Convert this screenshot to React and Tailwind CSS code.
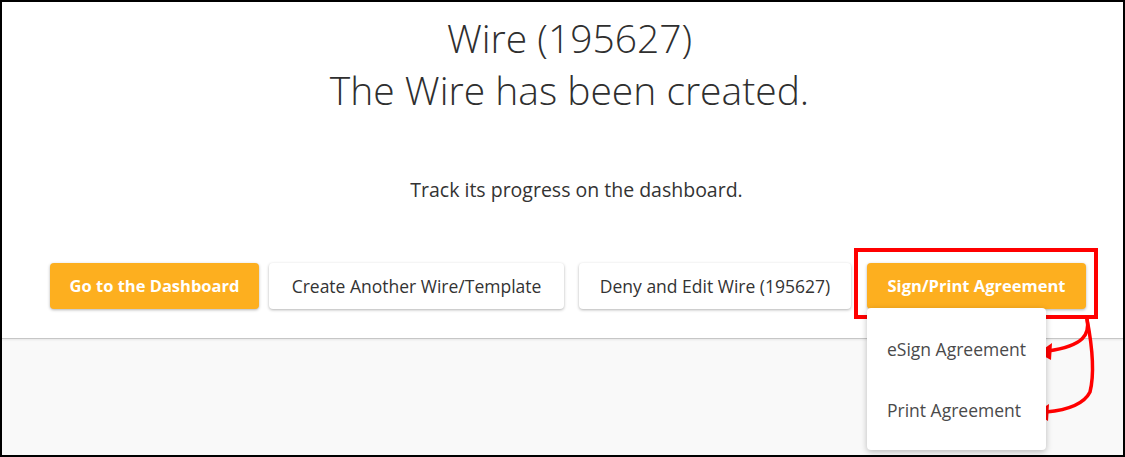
import React from "react";

const btnBase =
  "h-[46px] rounded-[4px] shadow-[0_1px_3px_rgba(0,0,0,0.3)] leading-[46px] text-center shrink-0 whitespace-nowrap";

const Annotations = () => (
  <svg
    className="absolute -left-[2px] -top-[2px] pointer-events-none"
    width="1125"
    height="457"
    viewBox="0 0 1125 457"
  >
    <rect x="856" y="250" width="240" height="67" fill="none" stroke="#ff0000" strokeWidth="4" />
    <path
      d="M1087 319 C1090 334 1084 346 1048 351"
      fill="none"
      stroke="#ff0000"
      strokeWidth="3.5"
      strokeLinecap="round"
    />
    <polygon points="1038,353 1052,343 1051,360" fill="#ff0000" />
    <path
      d="M1087 319 C1093 350 1094 376 1090 392 C1084 404 1068 410 1046 412"
      fill="none"
      stroke="#ff0000"
      strokeWidth="3.5"
      strokeLinecap="round"
    />
    <polygon points="1035,413 1049,404 1048,421" fill="#ff0000" />
  </svg>
);

export default function App() {
  return (
    <div className="relative w-[1125px] h-[457px] border-2 border-black bg-[#f9f9f9] overflow-hidden font-['Open_Sans',sans-serif]">
      <div className="h-[337px] bg-white border-b border-[#c6c6c6] shadow-[0_1px_2px_rgba(0,0,0,0.08)] flex flex-col">
        <div className="flex flex-col items-center pl-[14px] pt-[13px] text-[#2f2f2f] font-light">
          <h1 className="text-[39px] leading-[46px]">Wire (195627)</h1>
          <h2 className="mt-[3px] text-[39px] leading-[52px]">The Wire has been created.</h2>
          <p className="mt-[61px] pl-[14px] text-[19.5px] leading-[26px] font-normal text-[#333]">
            Track its progress on the dashboard.
          </p>
        </div>

        <div className="flex items-start mt-[60px] pl-[48px]">
          <button className={`${btnBase} w-[209px] bg-[#fdaf1f] text-white font-bold text-[16.5px]`}>
            Go to the Dashboard
          </button>
          <button className={`${btnBase} ml-[10px] w-[295px] bg-white text-[#333] text-[17.5px]`}>
            Create Another Wire/Template
          </button>
          <button className={`${btnBase} ml-[15px] w-[272px] bg-white text-[#333] text-[17.5px]`}>
            Deny and Edit Wire (195627)
          </button>
          <div className="relative ml-[16px]">
            <button className={`${btnBase} w-[219px] bg-[#fdaf1f] text-white font-bold text-[16.5px]`}>
              Sign/Print Agreement
            </button>
            <div className="absolute left-0 top-[45px] w-[179px] z-10 rounded-[4px] bg-white shadow-[0_2px_6px_rgba(0,0,0,0.25)] pt-[11px] pb-[9px]">
              <div className="pl-[20px] h-[61px] leading-[61px] text-[17.5px] text-[#4a4a4a]">eSign Agreement</div>
              <div className="pl-[20px] h-[61px] leading-[61px] text-[17.5px] text-[#4a4a4a]">Print Agreement</div>
            </div>
          </div>
        </div>
      </div>
      <Annotations />
    </div>
  );
}
